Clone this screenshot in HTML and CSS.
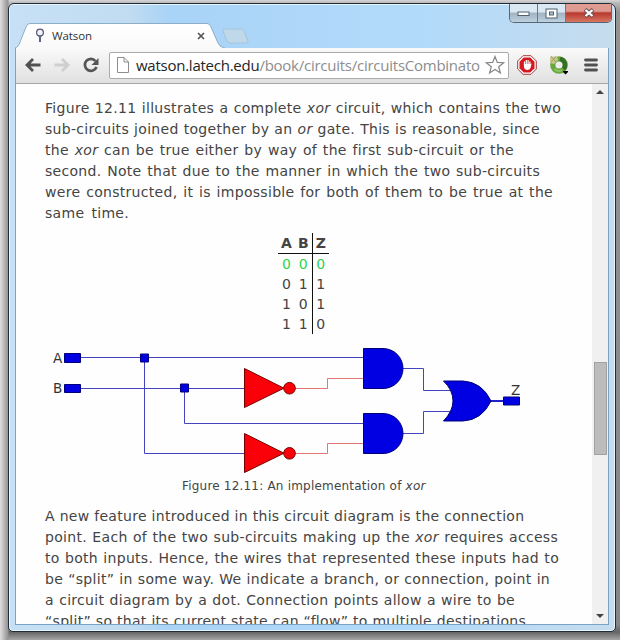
FILE: index.html
```
<!DOCTYPE html>
<html lang="en">
<head>
<meta charset="utf-8">
<title>Watson</title>
<link rel="stylesheet" href="styles.css">
</head>
<body>
<div class="window">
  <header class="titlebar">
    <div class="tab">
      <svg class="tab-shape" width="210" height="25" viewBox="0 0 210 25"><defs><linearGradient id="tabfill" x1="0" y1="0" x2="0" y2="1"><stop offset="0" stop-color="#fff"/><stop offset="1" stop-color="#fafafa"/></linearGradient></defs><path d="M0 25C3 24 4 22 5 19L11 4Q12 .5 15 .5H192Q195 .5 196 4L203 20Q205 24 208 24.5L210 25" fill="url(#tabfill)" stroke="#8caec7"/></svg>
      <svg class="favicon" width="10" height="16" viewBox="0 0 10 16"><circle cx="5" cy="4.5" r="3.4" fill="#f4f4fc" stroke="#555579" stroke-width="1.2"/><path d="M5 8V14" stroke="#46466c" stroke-width="1.7"/><path d="M3 8.3H7" stroke="#777790"/></svg>
      <span class="tab-title">Watson</span>
      <svg class="tab-close" width="8" height="8" viewBox="0 0 8 8"><path d="M1 1L7 7M7 1L1 7" stroke="#555" stroke-width="1.7"/></svg>
    </div>
    <svg class="new-tab" width="28" height="17" viewBox="0 0 28 17"><path d="M1 1H19Q21 1 22 3L26 13Q26.500 15 24 15H8Q6 15 5 13L1 3Z" fill="#bfd9eb" stroke="#a4c4dc"/></svg>
    <div class="controls">
      <span class="control"><svg width="13" height="7" viewBox="0 0 13 7"><rect x="1" y="2" width="11" height="3.500" fill="#fff" stroke="#51606f"/></svg></span>
      <span class="control"><svg width="13" height="11" viewBox="0 0 13 11"><rect x="1" y="1" width="11" height="9" fill="#fff" stroke="#51606f"/><rect x="4.500" y="4" width="4" height="3" fill="#adc5da" stroke="#51606f"/></svg></span>
      <span class="control close"><svg width="12" height="10" viewBox="0 0 12 10"><path d="M2 1.500L10 8.500M10 1.500L2 8.500" stroke="#685057" stroke-width="4"/><path d="M2.500 2L9.500 8M9.500 2L2.500 8" stroke="#fff" stroke-width="2.300"/></svg></span>
    </div>
  </header>
  <div class="client">
    <nav class="toolbar">
      <svg class="nav-icon" width="16" height="16" viewBox="0 0 16 16"><path d="M8 2L2 8L8 14M2.500 8H15.500" fill="none" stroke="#505050" stroke-width="2.800"/></svg>
      <svg class="nav-icon" width="16" height="16" viewBox="0 0 16 16"><path d="M8 2L14 8L8 14M13.500 8H.5" fill="none" stroke="#cfcfcf" stroke-width="2.800"/></svg>
      <svg class="nav-icon" width="16" height="16" viewBox="0 0 16 16"><path d="M12.500 4A6 6 0 1 0 13.500 10" fill="none" stroke="#555" stroke-width="2.700"/><path d="M15.500 1V8H8.500Z" fill="#555"/></svg>
      <div class="omnibox">
        <svg class="doc" width="12" height="16" viewBox="0 0 12 16"><path d="M.5 .5H7L11.500 5V15.500H.5ZM7 .5V5H11.500" fill="#fff" stroke="#8d8d8d"/></svg>
        <div class="url"><b>watson.latech.edu</b>/book/circuits/circuitsCombinato</div>
        <svg class="star" width="20" height="20" viewBox="0 0 20 20"><path d="M10 1.500L12.300 7.400L18.700 7.700L13.700 11.700L15.400 18L10 14.500L4.600 18L6.300 11.700L1.300 7.700L7.700 7.400Z" fill="#fff" stroke="#858585" stroke-width="1.200"/></svg>
      </div>
      <svg class="adblock" width="20" height="20" viewBox="0 0 20 20"><path d="M6 .7H14L19.300 6V14L14 19.300H6L.7 14V6Z" fill="#fff" stroke="#a23b3b"/><path d="M6.700 2.500H13.300L17.500 6.700V13.300L13.300 17.500H6.700L2.500 13.300V6.700Z" fill="#d51920"/><path d="M7.500 10V6.500M9.300 10V5M11.100 10V5M12.900 10V6.500" stroke="#fff" stroke-width="1.200" fill="none"/><path d="M6.900 9H13.500L14.600 8.500L13.500 13Q12.500 15 10.500 15Q7 15 6.900 11Z" fill="#fff"/></svg>
      <svg class="ring" width="20" height="20" viewBox="0 0 20 20"><circle cx="10" cy="10" r="6.200" fill="none" stroke="#69a63b" stroke-width="5.300"/><path d="M11 3.800A6.200 6.200 0 0 1 14.500 14" fill="none" stroke="#346f28" stroke-width="4.300"/><path d="M5.500 14A6 6 0 0 0 13 15" fill="none" stroke="#8bc466" stroke-width="2"/><path d="M1 2L8 1L9 5L5 9L1 8Z" fill="#c5c894"/><path d="M2 1L7 7M7 2L2 7" stroke="#a8a052"/><path d="M14 16H19V17L16.500 19.500L14 17Z" fill="#000"/></svg>
      <svg class="menu" width="14" height="14" viewBox="0 0 14 14"><path d="M1.500 2H12.500M1.500 7H12.500M1.500 12H12.500" stroke="#505050" stroke-width="2.800" stroke-linecap="round"/></svg>
    </nav>
    <div class="viewport">
      <main class="page">
        <p class="prose">
          <span class="line l1">Figure 12.11 illustrates a complete <em>xor</em> circuit, which contains the two</span>
          <span class="line l2">sub-circuits joined together by an <em>or</em> gate. This is reasonable, since</span>
          <span class="line l3">the <em>xor</em> can be true either by way of the first sub-circuit or the</span>
          <span class="line l4">second. Note that due to the manner in which the two sub-circuits</span>
          <span class="line l5">were constructed, it is impossible for both of them to be true at the</span>
          <span class="line l6">same time.</span>
        </p>
        <table class="truth">
          <thead><tr><th>A</th><th>B</th><th>Z</th></tr></thead>
          <tbody>
            <tr class="active"><td>0</td><td>0</td><td>0</td></tr>
            <tr><td>0</td><td>1</td><td>1</td></tr>
            <tr><td>1</td><td>0</td><td>1</td></tr>
            <tr><td>1</td><td>1</td><td>0</td></tr>
          </tbody>
        </table>
        <figure class="figure">
          <svg class="circuit" width="516" height="136" viewBox="45 340 516 136">
            <g fill="none" stroke="#4444bd" stroke-width="1">
              <path d="M80 357.500H364M144.500 357.500V453.500H244M80 388.500H244M184.500 388.500V423.500H364M403 368.500H423.500V390.500H451M403 433.500H423.500V411.500H451"/>
              <path d="M490 401H504" stroke="#2222ca" stroke-width="2"/>
            </g>
            <path d="M295 388.500H327.500V378.500H364M295 453.500H327.500V443.500H364" fill="none" stroke="#df7777"/>
            <g fill="#0000e3" stroke="#000078" stroke-width="1">
              <path d="M64.500 353.500H80.500V362.500H64.500ZM64.500 384.500H80.500V392.500H64.500ZM503.500 397H519.500V405H503.500Z"/>
              <path d="M140.500 354H148.500V362H140.500ZM180.500 384H188.500V392H180.500Z"/>
              <path d="M363.500 348.500H383A20 20 0 0 1 383 388.500H363.500ZM363.500 413.500H383A20 20 0 0 1 383 453.500H363.500Z"/>
              <path d="M443.500 381H463Q482 382 491 401Q482 420 463 421H443.500Q453 411 453 401Q453 390 443.500 381Z"/>
            </g>
            <g fill="#fa0009" stroke="#780000">
              <path d="M244.500 368.500L284 388.200L244.500 407.500ZM244.500 433.500L284 453.200L244.500 472.500Z"/>
              <circle cx="289.500" cy="388.200" r="5.800"/><circle cx="289.500" cy="453.300" r="5.800"/>
            </g>
            <g class="label"><text x="53" y="363">A</text><text x="53" y="393">B</text><text x="511" y="395">Z</text></g>
          </svg>
          <figcaption class="caption">Figure 12.11: An implementation of <em>xor</em></figcaption>
        </figure>
        <p class="prose">
          <span class="line l7">A new feature introduced in this circuit diagram is the connection</span>
          <span class="line l8">point. Each of the two sub-circuits making up the <em>xor</em> requires access</span>
          <span class="line l9">to both inputs. Hence, the wires that represented these inputs had to</span>
          <span class="line l10">be “split” in some way. We indicate a branch, or connection, point in</span>
          <span class="line l11">a circuit diagram by a dot. Connection points allow a wire to be</span>
          <span class="line l12">“split” so that its current state can “flow” to multiple destinations.</span>
        </p>
      </main>
      <aside class="scrollbar">
        <span class="arrow up"></span>
        <span class="thumb"></span>
        <span class="arrow down"></span>
      </aside>
    </div>
  </div>
</div>
</body>
</html>
```

FILE: styles.css
```
* { box-sizing: border-box; }

body {
  margin: 0;
  width: 620px;
  height: 640px;
  padding: 3px 4px 8px 8px;
  overflow: hidden;
  background: linear-gradient(90deg, #e1dedf 0, #929292 8px, transparent 9px),
    linear-gradient(180deg, #d9d5d9 0, #b8b8b8 3px, #949494 12px, #858585 625px, #646464 632px, #a6a6a6 640px);
  font-family: "DejaVu Sans", sans-serif;
  color: #444;
}

.window {
  height: 629px;
  padding: 0 6px 6px;
  border: 1px solid #202c37;
  border-radius: 6px 7px 5px 5px;
  background: linear-gradient(90deg, #c7e0f5, #c1dcf1 120px, #a9d3f7 160px, #b2dafa 420px, #c6dced);
  box-shadow: inset 0 0 0 1px #e7f5ff;
}

.titlebar { display: flex; height: 44px; align-items: flex-start; }

.tab {
  display: grid;
  grid-template-columns: 20px 10px 7px 145px 8px;
  align-items: center;
  width: 207px;
  height: 25px;
  margin-top: 19px;
  flex: none;
}
.tab > * { grid-row: 1; }
.tab-shape { grid-column: 1 / -1; align-self: start; }
.favicon { grid-column: 2; }
.tab-title {
  grid-column: 4;
  font: 11.5px "Open Sans", sans-serif;
  letter-spacing: -0.1px;
  color: #333;
}
.tab-close { grid-column: 5; }
.new-tab { margin-top: 24px; flex: none; }

.controls {
  display: flex;
  width: 103px;
  height: 19px;
  margin-left: auto;
  margin-right: -3px;
  border: 1px solid #566674;
  border-top: 0;
  border-radius: 0 0 5px 5px;
  overflow: hidden;
}
.control {
  display: flex;
  width: 28px;
  align-items: center;
  justify-content: center;
  border-right: 1px solid #6b7a87;
  background: linear-gradient(#d9e8f3 0 45%, #a2b2c0 50%, #bdd1e1);
}
.control.close {
  flex: 1;
  border-right: 0;
  background: linear-gradient(#df9a91 0 40%, #b6392e 50%, #d87662);
}

.client {
  width: 594px;
  height: 577px;
  border: 1px solid #78a3c4;
  border-top: 0;
  overflow: hidden;
}

.toolbar {
  display: flex;
  align-items: center;
  height: 36px;
  padding: 0 0 1px 9px;
  background: linear-gradient(#fafafa, #e0e0e0);
  border-bottom: 1px solid #a6a6a6;
}
.nav-icon { flex: none; margin-right: 13px; }
.omnibox {
  display: flex;
  align-items: center;
  width: 400px;
  height: 27px;
  margin-left: -3px;
  padding: 0 2px 0 7px;
  border: 1px solid #ababab;
  border-radius: 2px;
  background: #fff;
  flex: none;
}
.doc { flex: none; margin-right: 7px; }
.url {
  width: 349px;
  overflow: hidden;
  white-space: nowrap;
  font: 15px/24px "Open Sans", sans-serif;
  letter-spacing: -0.25px;
  color: #8d8d8d;
}
.url b { font-weight: 400; color: #242424; }
.star { flex: none; }
.adblock { flex: none; margin-left: 8px; }
.ring { flex: none; margin-left: 12px; }
.menu { flex: none; margin-left: 15px; }

.viewport { display: flex; height: 540px; background: #fefefe; }

.page { flex: 1; height: 540px; padding: 14px 0 0 29px; overflow: hidden; }
.prose { margin: 0; font-size: 14px; line-height: 21px; letter-spacing: 0.3px; }
.line {
  display: block;
  height: 21px;
  white-space: nowrap;
  text-align: justify;
  text-align-last: justify;
}
.l1 { width: 516px; }
.l2 { width: 495px; }
.l3 { width: 469px; }
.l4 { width: 495px; }
.l5 { width: 508px; }
.l6 { width: 84px; }
.l7 { width: 478px; }
.l8 { width: 513px; }
.l9 { width: 514px; }
.l10 { width: 505px; }
.l11 { width: 470px; }
.l12 { width: 483px; }

.truth {
  margin: 9px 0 0 233px;
  border-collapse: collapse;
  font-size: 14px;
  line-height: 20px;
  text-align: center;
}
.truth th, .truth td { width: 17px; height: 20px; padding: 0; }
.truth th { border-bottom: 1px solid #111; }
.truth th:last-child, .truth td:last-child { border-left: 1px solid #111; }
.active { color: #2fd34b; }

.figure { margin: 6px 0 9px; width: 516px; }
.circuit { display: block; }
.label { font-size: 13.5px; fill: #333; }
.caption {
  height: 21px;
  padding-left: 137px;
  font-size: 12px;
  line-height: 21px;
  letter-spacing: 0.2px;
  white-space: nowrap;
}

.scrollbar {
  display: flex;
  flex-direction: column;
  align-items: center;
  width: 16px;
  height: 540px;
  padding: 6px 0;
  background: #f0f0f0;
}
.arrow { width: 0; height: 0; border: 4px solid transparent; }
.up { border-top: 0; border-bottom: 4px solid #444; }
.thumb {
  width: 13px;
  height: 93px;
  margin-top: 268px;
  border: 1px solid #a2a2a2;
  background: #bcbcbc;
}
.down { margin-top: auto; border-bottom: 0; border-top: 4px solid #444; }
```
